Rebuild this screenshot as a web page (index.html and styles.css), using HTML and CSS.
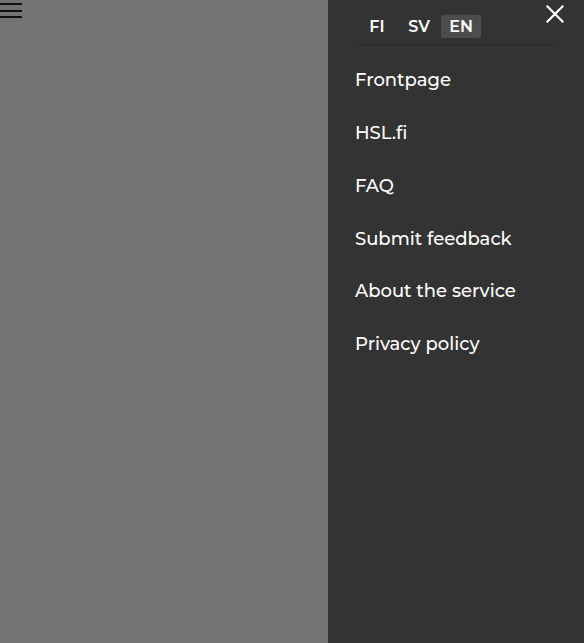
FILE: index.html
```html
<!DOCTYPE html>
<html lang="en">
<head>
<meta charset="utf-8">
<link rel="stylesheet" href="styles.css">
</head>
<body>
<div class="page">
  <div class="backdrop">
    <button class="hamburger" aria-label="Menu">
      <svg width="22" height="18" viewBox="0 0 22 18"><rect x="0" y="3" width="22" height="2" fill="#111"/><rect x="0" y="10" width="22" height="2" fill="#111"/><rect x="0" y="16" width="22" height="2" fill="#111"/></svg>
    </button>
  </div>
  <nav class="drawer">
    <button class="close" aria-label="Close">
      <svg width="18" height="18" viewBox="0 0 18 18"><path d="M1.5 1.5 L16.5 16.5 M16.5 1.5 L1.5 16.5" stroke="#fff" stroke-width="2.2" stroke-linecap="square"/></svg>
    </button>
    <div class="langs">
      <span class="lang">FI</span>
      <span class="lang">SV</span>
      <span class="lang active">EN</span>
    </div>
    <ul class="menu">
      <li>Frontpage</li>
      <li>HSL.fi</li>
      <li>FAQ</li>
      <li>Submit feedback</li>
      <li>About the service</li>
      <li>Privacy policy</li>
    </ul>
  </nav>
</div>
</body>
</html>
```
FILE: styles.css
```css
html, body { margin: 0; padding: 0; height: 100%; }
body { font-family: "Montserrat", "Lato", "Noto Sans", sans-serif; }
.page { display: flex; height: 100vh; }
.backdrop { flex: 0 0 328px; background: #737373; position: relative; }
.hamburger { border: 0; background: none; padding: 0; margin: 0; display: block; line-height: 0; }
.drawer { flex: 1; background: #333333; color: #fff; position: relative; padding: 15px 27px 0 27px; }
.close { position: absolute; top: 5px; left: 218px; border: 0; background: none; padding: 0; line-height: 0; }
.langs { display: flex; gap: 2px; align-items: center; border-bottom: 1px solid #262626; padding-bottom: 6px; padding-left: 2px; }
.lang { font-size: 16px; font-weight: 600; height: 23px; line-height: 23px; border-radius: 3px; width: 40px; text-align: center; }
.lang.active { background: #4d4d4d; }
.menu { list-style: none; margin: 0; padding: 0; }
.menu li { font-size: 18px; font-weight: 500; line-height: 22px; margin-top: 31px; }
.menu li:first-child { margin-top: 24px; }
.menu li:nth-child(n+4) { margin-top: 30.5px; }
```
